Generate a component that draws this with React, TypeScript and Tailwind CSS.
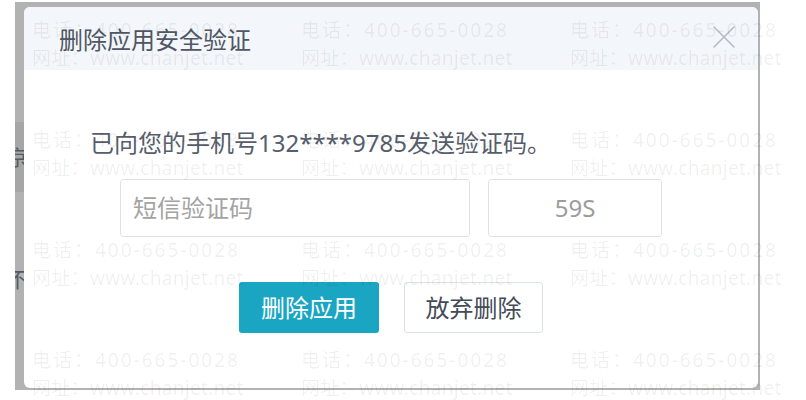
const rows = [0, 1, 2, 3];
const cols = [0, 1, 2];

const Watermark = () => (
  <div className="pointer-events-none absolute inset-0 overflow-hidden pl-[32px] pt-[16px]">
    <div className="grid grid-cols-[269px_269px_269px] gap-y-[54px]">
      {rows.map((r) =>
        cols.map((c) => (
          <div key={`${r}-${c}`} className="text-[19px] leading-[28px] text-black/[0.065] whitespace-nowrap">
            <div className="tracking-[2px]">电话：400-665-0028</div>
            <div className="tracking-[0.3px]">网址：www.chanjet.net</div>
          </div>
        ))
      )}
    </div>
  </div>
);

export default function App() {
  return (
    <div className="relative w-[806px] h-[400px] overflow-hidden bg-white font-['Noto_Sans','Noto_Sans_CJK_SC',sans-serif]">
      <div className="pl-[15px] pt-[2px]">
        {/* gray mask frame around the dialog */}
        <div className="flex w-[745px] h-[388px] bg-[#b2b2b2] pt-[5px] pr-[2px] pb-[2px]">
          {/* page behind, peeking out on the left */}
          <div className="w-[9px] shrink-0 overflow-hidden flex flex-col">
            <div className="h-[115px]" />
            <div className="h-[70px] bg-[#a6a6a6] flex items-center">
              <span className="-ml-[8px] text-[21px] text-[#555b66] leading-none">京</span>
            </div>
            <div className="h-[77px]" />
            <span className="-ml-[8px] text-[21px] text-[#555b66] leading-none">不</span>
          </div>

          {/* dialog */}
          <div className="flex-1 flex flex-col bg-white rounded-[6px] overflow-hidden">
            <div className="h-[63px] shrink-0 bg-[#f3f6fa] flex items-center justify-between pl-[35px] pr-[22px]">
              <span className="text-[24px] leading-[32px] mt-[2px] text-[#4f5664]">删除应用安全验证</span>
              <svg width="24" height="24" viewBox="0 0 24 24" className="-mt-[4px]">
                <path d="M2 2L22 22M22 2L2 22" stroke="#b6bac2" strokeWidth="1.6" strokeLinecap="round" />
              </svg>
            </div>

            <div className="flex flex-col">
              <p className="mt-[57px] pl-[66px] text-[24px] leading-[32px] text-[#565e6b]">
                已向您的手机号132****9785发送验证码。
              </p>

              <div className="mt-[20px] flex justify-center gap-[18px]">
                <div className="w-[350px] h-[58px] border border-[#dfe3e9] rounded-[3px] flex items-center pl-[12px] text-[24px] text-[#a3a3a3]">
                  短信验证码
                </div>
                <div className="w-[174px] h-[58px] border border-[#dfe3e9] rounded-[3px] flex items-center justify-center text-[24px] text-[#9c9c9c]">
                  59S
                </div>
              </div>

              <div className="mt-[45px] flex justify-center gap-[25px]">
                <button className="w-[140px] h-[51px] rounded-[3px] bg-[#1aa6c2] text-white text-[24px]">
                  删除应用
                </button>
                <button className="w-[139px] h-[51px] rounded-[3px] border border-[#dde2e8] bg-white text-[#434a58] text-[24px]">
                  放弃删除
                </button>
              </div>
            </div>
          </div>
        </div>
      </div>

      <Watermark />
    </div>
  );
}
